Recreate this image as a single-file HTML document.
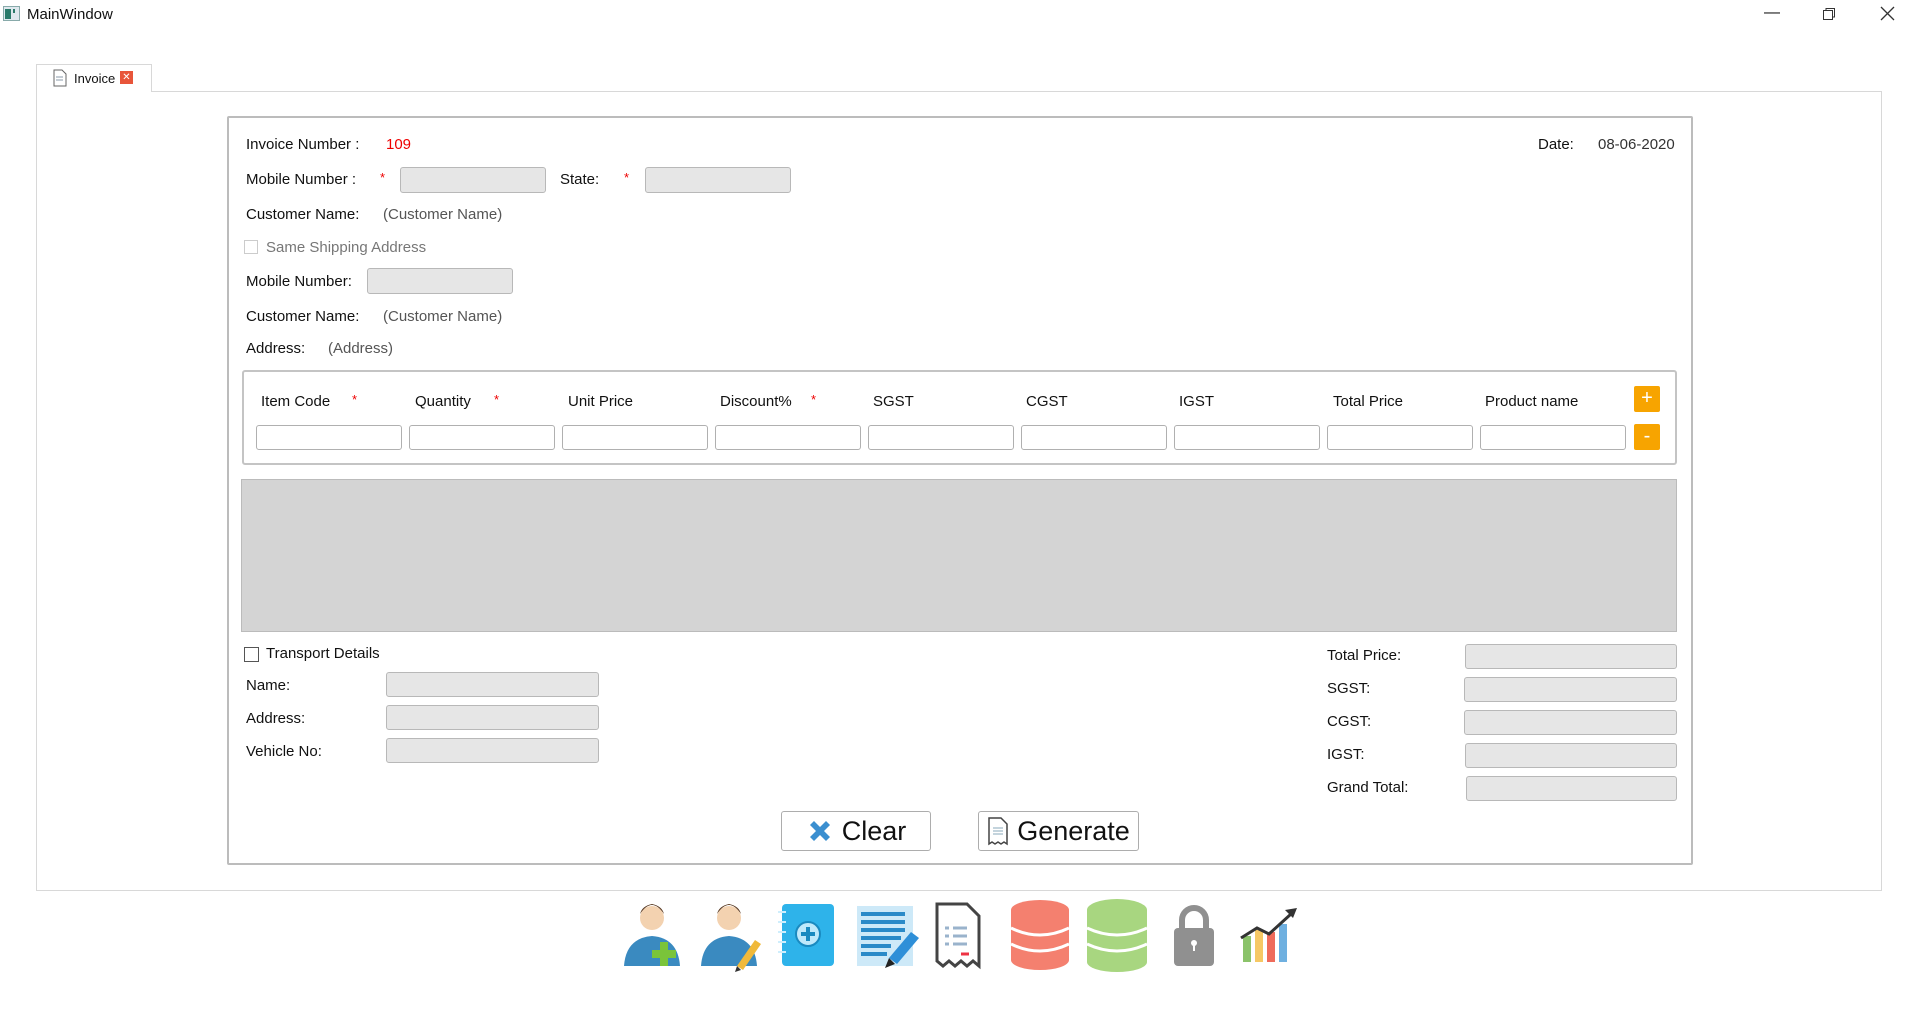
<!DOCTYPE html>
<html><head><meta charset="utf-8"><style>
body{margin:0;width:1920px;height:1030px;background:#fff;font-family:"Liberation Sans","DejaVu Sans",sans-serif;font-size:15px;color:#111;position:relative;overflow:hidden}
.a{position:absolute;white-space:nowrap}
.in{position:absolute;background:#e6e6e6;border:1px solid #b8b8b8;border-radius:3px;box-sizing:border-box}
.wi{position:absolute;background:#fff;border:1px solid #b0b0b0;border-radius:3px;box-sizing:border-box;top:425px;width:146px;height:25px}
.red{color:#e00}
.g{color:#555}
.st{color:#e00;font-size:13px}
.btn{position:absolute;border:1px solid #adadad;border-radius:3px;background:#fff;box-sizing:border-box;font-size:27px;display:flex;align-items:center;justify-content:center;gap:8px}
.ob{position:absolute;width:26px;height:26px;background:#f7a400;color:#fff;font-size:20px;text-align:center;line-height:24px;border-radius:2px}
.cb{position:absolute;width:14px;height:14px;border:1px solid #888;background:#fff;box-sizing:border-box}
</style></head><body>
<svg class="a" style="left:3px;top:6px" width="18" height="16"><rect x="0.5" y="0.5" width="16" height="14" fill="#dfe8ee" stroke="#8aa"/><rect x="2" y="3" width="6" height="10" fill="#2a7a6a"/><rect x="10" y="3" width="2" height="4" fill="#2a7a6a"/></svg>
<div class="a" style="left:27px;top:6px;font-size:15px">MainWindow</div>
<div class="a" style="left:1764px;top:4px;font-size:16px">—</div>
<svg class="a" style="left:1822px;top:7px" width="14" height="14"><rect x="1.5" y="3.5" width="9" height="9" fill="none" stroke="#333"/><path d="M4 3.5V1.5h8.5v8.5h-2" fill="none" stroke="#333"/></svg>
<svg class="a" style="left:1880px;top:6px" width="15" height="15"><path d="M1 1L14 14M14 1L1 14" stroke="#333" stroke-width="1.3"/></svg>

<div class="a" style="left:36px;top:91px;width:1846px;height:800px;border:1px solid #d8d8d8;box-sizing:border-box"></div>
<div class="a" style="left:36px;top:64px;width:116px;height:28px;border:1px solid #d8d8d8;border-bottom:none;background:#fff;box-sizing:border-box"></div>
<svg class="a" style="left:53px;top:69px" width="14" height="18"><path d="M1 1h8l4 4v12H1z" fill="#fff" stroke="#666"/><path d="M3 8h7M3 11h7" stroke="#89a"/></svg>
<div class="a" style="left:74px;top:71px;font-size:13px">Invoice</div>
<div class="a" style="left:120px;top:71px;width:13px;height:13px;background:#e8553a;color:#fff;font-size:10px;line-height:13px;text-align:center">✕</div>

<div class="a" style="left:227px;top:116px;width:1466px;height:749px;border:2px solid #bcbcbc;border-radius:2px;box-sizing:border-box"></div>

<div class="a" style="left:246px;top:136px">Invoice Number :</div>
<div class="a red" style="left:386px;top:136px">109</div>
<div class="a" style="left:1538px;top:136px">Date:</div>
<div class="a g" style="left:1598px;top:136px;color:#333">08-06-2020</div>

<div class="a" style="left:246px;top:171px">Mobile Number :</div>
<div class="a st" style="left:380px;top:170px">*</div>
<div class="in" style="left:400px;top:167px;width:146px;height:26px"></div>
<div class="a" style="left:560px;top:171px">State:</div>
<div class="a st" style="left:624px;top:170px">*</div>
<div class="in" style="left:645px;top:167px;width:146px;height:26px"></div>

<div class="a" style="left:246px;top:206px">Customer Name:</div>
<div class="a g" style="left:383px;top:206px">(Customer Name)</div>

<div class="cb" style="left:244px;top:240px;border-color:#ccc"></div>
<div class="a" style="left:266px;top:239px;color:#777">Same Shipping Address</div>

<div class="a" style="left:246px;top:273px">Mobile Number:</div>
<div class="in" style="left:367px;top:268px;width:146px;height:26px"></div>
<div class="a" style="left:246px;top:308px">Customer Name:</div>
<div class="a g" style="left:383px;top:308px">(Customer Name)</div>
<div class="a" style="left:246px;top:340px">Address:</div>
<div class="a g" style="left:328px;top:340px">(Address)</div>

<div class="a" style="left:242px;top:370px;width:1435px;height:95px;border:2px solid #c4c4c4;border-radius:3px;box-sizing:border-box"></div>
<div class="a" style="left:261px;top:393px">Item Code</div><div class="a st" style="left:352px;top:392px">*</div>
<div class="a" style="left:415px;top:393px">Quantity</div><div class="a st" style="left:494px;top:392px">*</div>
<div class="a" style="left:568px;top:393px">Unit Price</div>
<div class="a" style="left:720px;top:393px">Discount%</div><div class="a st" style="left:811px;top:392px">*</div>
<div class="a" style="left:873px;top:393px">SGST</div>
<div class="a" style="left:1026px;top:393px">CGST</div>
<div class="a" style="left:1179px;top:393px">IGST</div>
<div class="a" style="left:1333px;top:393px">Total Price</div>
<div class="a" style="left:1485px;top:393px">Product name</div>
<div class="wi" style="left:256px"></div><div class="wi" style="left:409px"></div><div class="wi" style="left:562px"></div><div class="wi" style="left:715px"></div><div class="wi" style="left:868px"></div><div class="wi" style="left:1021px"></div><div class="wi" style="left:1174px"></div><div class="wi" style="left:1327px"></div><div class="wi" style="left:1480px"></div>
<div class="ob" style="left:1634px;top:386px">+</div>
<div class="ob" style="left:1634px;top:424px">-</div>

<div class="a" style="left:241px;top:479px;width:1436px;height:153px;background:#d4d4d4;border:1px solid #bbb;box-sizing:border-box"></div>

<div class="cb" style="left:244px;top:647px;width:15px;height:15px;border-color:#555"></div>
<div class="a" style="left:266px;top:645px">Transport Details</div>
<div class="a" style="left:246px;top:677px">Name:</div>
<div class="a" style="left:246px;top:710px">Address:</div>
<div class="a" style="left:246px;top:743px">Vehicle No:</div>
<div class="in" style="left:386px;top:672px;width:213px;height:25px"></div>
<div class="in" style="left:386px;top:705px;width:213px;height:25px"></div>
<div class="in" style="left:386px;top:738px;width:213px;height:25px"></div>

<div class="a" style="left:1327px;top:647px">Total Price:</div>
<div class="a" style="left:1327px;top:680px">SGST:</div>
<div class="a" style="left:1327px;top:713px">CGST:</div>
<div class="a" style="left:1327px;top:746px">IGST:</div>
<div class="a" style="left:1327px;top:779px">Grand Total:</div>
<div class="in" style="left:1465px;top:644px;width:212px;height:25px"></div>
<div class="in" style="left:1464px;top:677px;width:213px;height:25px"></div>
<div class="in" style="left:1464px;top:710px;width:213px;height:25px"></div>
<div class="in" style="left:1465px;top:743px;width:212px;height:25px"></div>
<div class="in" style="left:1466px;top:776px;width:211px;height:25px"></div>

<div class="btn" style="left:781px;top:811px;width:150px;height:40px"><svg width="28" height="28"><path d="M4 8L8 4L14 10L20 4L24 8L18 14L24 20L20 24L14 18L8 24L4 20L10 14Z" fill="#3b8fd0"/></svg>Clear</div>
<div class="btn" style="left:978px;top:811px;width:161px;height:40px"><svg width="22" height="30"><path d="M2 2h12l6 6v20l-3-2-3 2-3-2-3 2-3-2-3 2z" fill="#fff" stroke="#444" stroke-width="1.5"/><path d="M6 12h10M6 15h10M6 18h10" stroke="#8ab"/></svg>Generate</div>

<!-- bottom icons -->
<svg class="a" style="left:620px;top:898px" width="680" height="76">
<g transform="translate(0,0)"><circle cx="32" cy="20" r="12" fill="#f3d2b0"/><path d="M20 16q12-18 24 0q-2-8-12-10q-10 2-12 10z" fill="#5a3a22"/><path d="M4 68q2-28 28-30q26 2 28 30z" fill="#3a8ac0"/><path d="M40 44h8v8h8v8h-8v8h-8v-8h-8v-8h8z" fill="#7ac43a"/></g>
<g transform="translate(77,0)"><circle cx="32" cy="20" r="12" fill="#f3d2b0"/><path d="M20 16q12-18 24 0q-2-8-12-10q-10 2-12 10z" fill="#5a3a22"/><path d="M4 68q2-28 28-30q26 2 28 30z" fill="#3a8ac0"/><path d="M58 42l6 4-18 26-6-4z" fill="#f0b93a"/><path d="M40 68l-2 6 6-2z" fill="#333"/></g>
<g transform="translate(156,0)"><rect x="6" y="6" width="52" height="62" rx="4" fill="#2eb3ea"/><circle cx="32" cy="36" r="12" fill="#bfe9fb" stroke="#1a8ac0" stroke-width="2"/><path d="M32 29v14M25 36h14" stroke="#1a8ac0" stroke-width="4"/><path d="M2 14h8M2 24h8M2 34h8M2 44h8M2 54h8" stroke="#cfeefc" stroke-width="2"/></g>
<g transform="translate(233,0)"><rect x="4" y="8" width="56" height="60" fill="#cde9f8"/><path d="M8 16h44M8 24h44M8 32h44M8 40h40M8 48h30M8 56h26" stroke="#2a8ac8" stroke-width="4"/><path d="M58 34l8 6-22 26-8-6z" fill="#2e8fd8"/><path d="M36 60l-4 10 10-4z" fill="#222"/></g>
<g transform="translate(311,0)"><path d="M6 6h30l12 12v50l-6-5-6 5-6-5-6 5-6-5-6 5-6-5z" fill="#fff" stroke="#444" stroke-width="3"/><path d="M14 30h4M22 30h14M14 38h4M22 38h14M14 46h4M22 46h14" stroke="#9ab3cc" stroke-width="3"/><path d="M30 56h8" stroke="#e34" stroke-width="3"/></g>
<g transform="translate(388,0)"><ellipse cx="32" cy="12" rx="29" ry="10" fill="#f4806f"/><rect x="3" y="12" width="58" height="50" fill="#f4806f"/><ellipse cx="32" cy="62" rx="29" ry="10" fill="#f4806f"/><path d="M3 30q29 14 58 0M3 46q29 14 58 0" stroke="#fff" stroke-width="3" fill="none"/></g>
<g transform="translate(465,0)"><ellipse cx="32" cy="12" rx="30" ry="11" fill="#a8d680"/><rect x="2" y="12" width="60" height="52" fill="#a8d680"/><ellipse cx="32" cy="64" rx="30" ry="10" fill="#a8d680"/><path d="M2 30q30 14 60 0M2 46q30 14 60 0" stroke="#fff" stroke-width="3" fill="none"/></g>
<g transform="translate(542,0)"><path d="M20 32v-10a12 12 0 0 1 24 0v10" fill="none" stroke="#909090" stroke-width="6"/><rect x="12" y="30" width="40" height="38" rx="4" fill="#909090"/><circle cx="32" cy="45" r="3" fill="#fff"/><path d="M32 45v8" stroke="#fff" stroke-width="2"/></g>
<g transform="translate(619,0)"><rect x="4" y="38" width="8" height="26" fill="#8bc36a"/><rect x="16" y="32" width="8" height="32" fill="#f6c864"/><rect x="28" y="34" width="8" height="30" fill="#ef6b5b"/><rect x="40" y="26" width="8" height="38" fill="#6fb0e0"/><path d="M2 40l16-10 12 6 22-20" fill="none" stroke="#333" stroke-width="3"/><path d="M46 12l12-2-4 10z" fill="#333"/></g>
</svg>
</body></html>
